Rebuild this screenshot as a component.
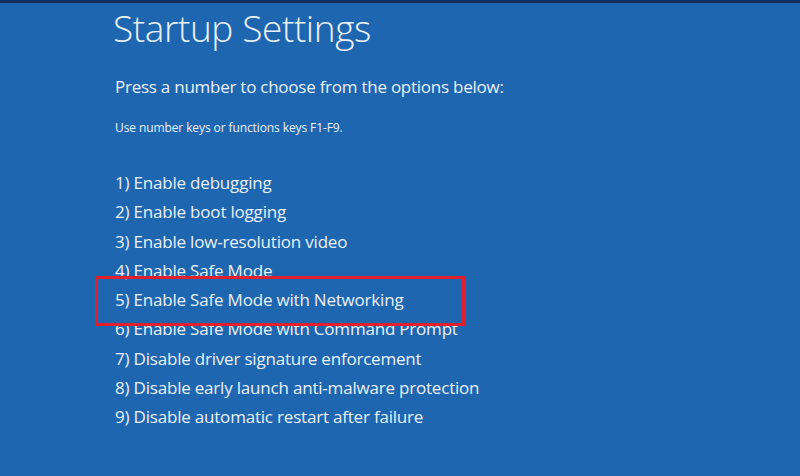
const options = [
  "1) Enable debugging",
  "2) Enable boot logging",
  "3) Enable low-resolution video",
  "4) Enable Safe Mode",
  "5) Enable Safe Mode with Networking",
  "6) Enable Safe Mode with Command Prompt",
  "7) Disable driver signature enforcement",
  "8) Disable early launch anti-malware protection",
  "9) Disable automatic restart after failure",
];

export default function App() {
  return (
    <div className="h-[476px] w-[800px] overflow-hidden bg-[#1f66b1] font-['Open_Sans',sans-serif] text-[#eaf1f9]">
      <div className="h-[3px] bg-[#12305f]" />
      <div className="pl-[113px] pt-[3px]">
        <h1 className="text-[37px] font-light leading-[44px] tracking-[-0.4px]">Startup Settings</h1>
        <p className="mt-[25px] pl-[2px] text-[17px] leading-[24px] tracking-[-0.25px]">
          Press a number to choose from the options below:
        </p>
        <p className="mt-[20px] pl-[2px] text-[12px] leading-[18px] tracking-[-0.1px]">
          Use number keys or functions keys F1-F9.
        </p>
        <ul className="mt-[31px] pl-[2px]">
          {options.map((label, i) => (
            <li key={label} className="relative text-[17px] leading-[29.25px] tracking-[-0.2px]">
              {label}
              {/* highlight around the networking option */}
              {i === 4 && (
                <span className="absolute -top-[9px] left-[-20px] z-10 h-[50px] w-[370px] border-[3px] border-[#e0202c]" />
              )}
            </li>
          ))}
        </ul>
      </div>
    </div>
  );
}
